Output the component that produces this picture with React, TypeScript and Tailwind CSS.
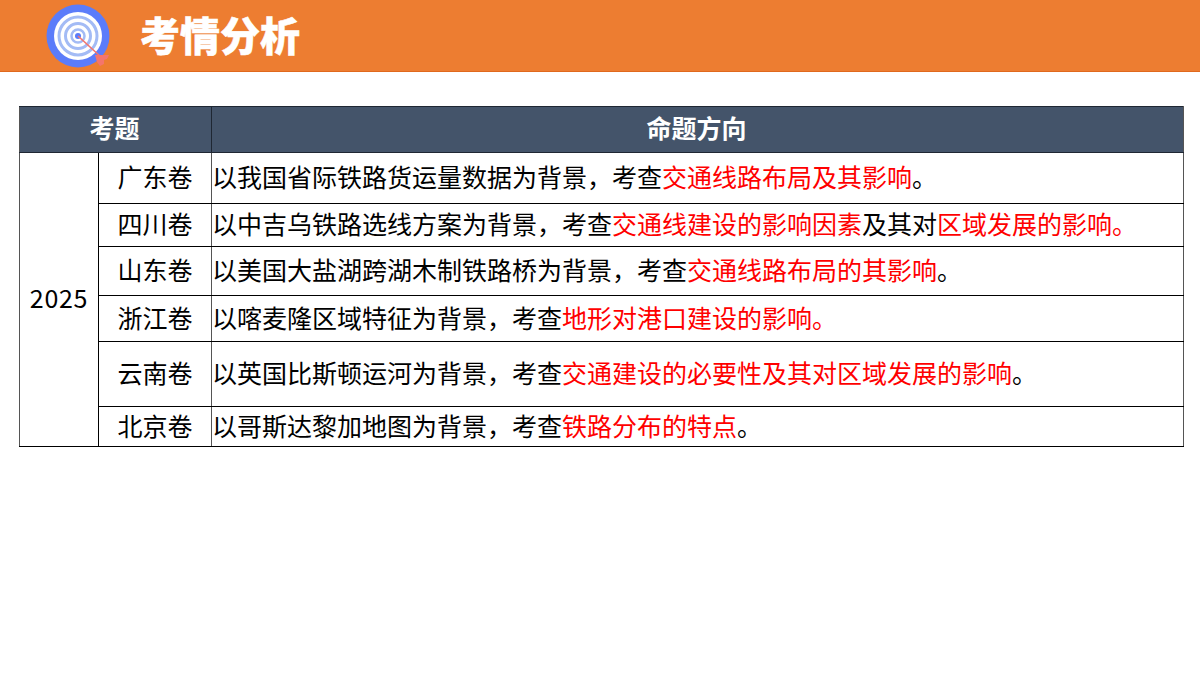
const FONT = "font-['Noto_Sans_CJK_SC','Noto_Sans',sans-serif]"

type Row = { paper: string; height: string; parts: [string, boolean][] }

const rows: Row[] = [
  { paper: '广东卷', height: 'h-[51px]', parts: [['以我国省际铁路货运量数据为背景，考查', false], ['交通线路布局及其影响', true], ['。', false]] },
  { paper: '四川卷', height: 'h-[43px]', parts: [['以中吉乌铁路选线方案为背景，考查', false], ['交通线建设的影响因素', true], ['及其对', false], ['区域发展的影响。', true]] },
  { paper: '山东卷', height: 'h-[49px]', parts: [['以美国大盐湖跨湖木制铁路桥为背景，考查', false], ['交通线路布局的其影响', true], ['。', false]] },
  { paper: '浙江卷', height: 'h-[46px]', parts: [['以喀麦隆区域特征为背景，考查', false], ['地形对港口建设的影响。', true]] },
  { paper: '云南卷', height: 'h-[65px]', parts: [['以英国比斯顿运河为背景，考查', false], ['交通建设的必要性及其对区域发展的影响', true], ['。', false]] },
  { paper: '北京卷', height: 'h-[40px]', parts: [['以哥斯达黎加地图为背景，考查', false], ['铁路分布的特点', true], ['。', false]] },
]

function TargetIcon() {
  return (
    <svg width="66" height="66" viewBox="0 0 66 66">
      <circle cx="32" cy="33" r="31.5" fill="#5b7cfa" />
      <circle cx="32" cy="33" r="24" fill="#ffffff" />
      <circle cx="32" cy="33" r="19" fill="none" stroke="#a3bbf5" strokeWidth="3" />
      <circle cx="32" cy="33" r="12.5" fill="none" stroke="#a3bbf5" strokeWidth="3" />
      <circle cx="32" cy="33" r="6.5" fill="none" stroke="#a3bbf5" strokeWidth="2.5" />
      <circle cx="32" cy="33" r="3" fill="#5b7cfa" />
      <line x1="32" y1="33" x2="55" y2="54" stroke="#f4756c" strokeWidth="1.6" />
      <path d="M49 52 L54 52 L58 52 L63 52 L61 56 L58 57 L58 61 L54 63 L51 59 Z" fill="#f4756c" />
    </svg>
  )
}

export default function App() {
  return (
    <div className={`w-[1200px] h-[675px] bg-white overflow-hidden text-black ${FONT}`}>
      {/* Banner */}
      <div className="h-[72px] bg-[#ed7d31] border-b border-[#e0691d] flex items-center pl-[46px]">
        <TargetIcon />
        <h1 className="ml-[28px] pb-[3px] text-[40px] leading-none font-black text-white [-webkit-text-stroke:0.5px_white]">考情分析</h1>
      </div>

      {/* Table */}
      <div className="pt-[34px] pl-[19px]">
        <table className="w-[1165px] table-fixed border-collapse text-[25px] leading-none">
          <colgroup>
            <col className="w-[79px]" />
            <col className="w-[113px]" />
            <col />
          </colgroup>
          <thead>
            <tr className="h-[46px] bg-[#44546a] text-white font-bold">
              <th colSpan={2} className="border border-[#1f2733] border-l-[#555] pb-[5px] pr-[2px] text-center font-bold">考题</th>
              <th className="border border-[#1f2733] border-r-[#555] pb-[5px] pr-[2px] text-center font-bold">命题方向</th>
            </tr>
          </thead>
          <tbody>
            {rows.map((row, i) => (
              <tr key={row.paper} className={row.height}>
                {i === 0 && (
                  <td rowSpan={rows.length} className="border border-black border-l-[#555] pb-[5px] text-center tracking-[0.7px]">2025</td>
                )}
                <td className="border border-black border-r-[#555] p-0 pb-[3px] text-center">{row.paper}</td>
                <td className="border border-black border-l-[#555] border-r-[#555] p-0 pb-[3px] whitespace-nowrap">
                  {row.parts.map(([text, red], j) => (
                    <span key={j} className={red ? 'text-[#ff0000]' : ''}>{text}</span>
                  ))}
                </td>
              </tr>
            ))}
          </tbody>
        </table>
      </div>
    </div>
  )
}
